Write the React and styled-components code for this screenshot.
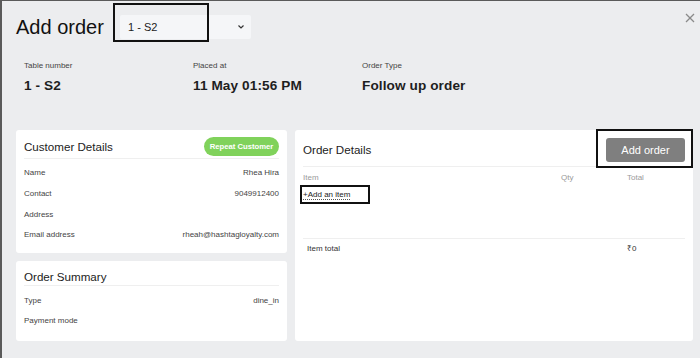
import React from "react";
import styled, { createGlobalStyle } from "styled-components";

const Global = createGlobalStyle`
  html, body { margin: 0; padding: 0; }
  body { font-family: "Liberation Sans", Arial, sans-serif; background: #ecedef; }
  * { box-sizing: border-box; }
`;

const Page = styled.div`
  width: 700px;
  height: 358px;
  overflow: hidden;
  background: #ecedef;
  border-top: 1px solid #5a5a5a;
  border-left: 2px solid #5a5a5a;
  padding: 14px 7px 0 14px;
  display: flex;
  flex-direction: column;
`;

const Header = styled.div`
  display: flex;
  align-items: center;
  height: 24px;
`;

const Title = styled.h1`
  margin: 0 16px 0 0;
  font-size: 20px;
  font-weight: 400;
  line-height: 24px;
  color: #111;
  width: 88px;
  white-space: nowrap;
`;

const Anchor = styled.div`
  position: relative;
  width: fit-content;
  line-height: 0;
`;

const Highlight = styled.div`
  position: absolute;
  border: 2px solid #111;
  pointer-events: none;
  left: ${(p) => p.$l}px;
  top: ${(p) => p.$t}px;
  width: ${(p) => p.$w}px;
  height: ${(p) => p.$h}px;
`;

const SelectBox = styled.div`
  width: 131px;
  height: 24px;
  background: #f5f6f8;
  border-radius: 2px;
  display: flex;
  align-items: center;
  justify-content: space-between;
  padding: 0 6px 0 8px;
  font-size: 11px;
  line-height: 14px;
  color: #222;
`;

const Close = styled.button`
  margin-left: auto;
  align-self: flex-start;
  margin-top: -3px;
  margin-right: -3px;
  background: none;
  border: none;
  padding: 0;
  width: 12px;
  height: 12px;
  display: flex;
  align-items: center;
  justify-content: center;
`;

const InfoGrid = styled.div`
  display: grid;
  grid-template-columns: 169px 169px 169px;
  padding-left: 8px;
  margin-top: 22px;
`;

const InfoCell = styled.div`
  display: flex;
  flex-direction: column;
  gap: 7px;
`;

const InfoLabel = styled.div`
  font-size: 8px;
  line-height: 10px;
  color: #444;
`;

const InfoValue = styled.div`
  font-size: 13.6px;
  line-height: 16px;
  font-weight: 700;
  color: #1e1e1e;
  letter-spacing: 0.1px;
`;

const Cards = styled.div`
  display: grid;
  grid-template-columns: 271px 1fr;
  gap: 8px;
  margin-top: 36px;
  height: 211px;
`;

const LeftCol = styled.div`
  display: flex;
  flex-direction: column;
  gap: 8px;
`;

const Card = styled.div`
  background: #fff;
  border-radius: 3px;
  padding: 8px 8px 8px;
  height: ${(p) => p.$h}px;
  display: flex;
  flex-direction: column;
`;

const CardHeader = styled.div`
  display: flex;
  align-items: center;
  justify-content: space-between;
  min-height: ${(p) => p.$h}px;
  padding-bottom: ${(p) => p.$pb}px;
  border-bottom: 1px solid #efefef;
`;

const CardTitle = styled.div`
  font-size: 11.6px;
  color: #222;
  line-height: 14px;
`;

const Pill = styled.span`
  background: #80d25b;
  color: #fff;
  font-weight: 700;
  font-size: 7.7px;
  height: 19px;
  width: 75px;
  border-radius: 10px;
  display: flex;
  align-items: center;
  justify-content: center;
`;

const Rows = styled.div`
  padding-top: 4px;
`;

const Row = styled.div`
  display: flex;
  justify-content: space-between;
  align-items: center;
  height: 20.6px;
  font-size: 8px;
  color: #444;
`;

const PrimaryBtn = styled.button`
  width: 79px;
  height: 24px;
  border: none;
  border-radius: 3px;
  background: #7f7f7f;
  color: #fff;
  font-family: "Liberation Sans", Arial, sans-serif;
  font-size: 11px;
  line-height: 14px;
  padding: 0;
`;

const TableGrid = styled.div`
  display: grid;
  grid-template-columns: 258px 66px 1fr;
  font-size: 8px;
  line-height: 10px;
  color: ${(p) => p.$c};
  padding-top: ${(p) => p.$pt}px;
`;

const Cell = styled.div`
  padding-left: ${(p) => p.$pl || 0}px;
`;

const ItemArea = styled.div`
  height: 56px;
  border-bottom: 1px solid #efefef;
  padding-top: 7px;
`;

const AddItem = styled.span`
  display: block;
  font-size: 8px;
  line-height: 9px;
  color: #222;
  border-bottom: 1px dotted #555;
  white-space: nowrap;
`;

const Chevron = () => (
  <svg width="8" height="6" viewBox="0 0 8 6">
    <polyline points="1.5,1.5 4,4 6.5,1.5" fill="none" stroke="#333" strokeWidth="1.2" />
  </svg>
);

const XIcon = () => (
  <svg width="10" height="10" viewBox="0 0 10 10">
    <line x1="1" y1="1" x2="9" y2="9" stroke="#8a8a8a" strokeWidth="1.3" />
    <line x1="9" y1="1" x2="1" y2="9" stroke="#8a8a8a" strokeWidth="1.3" />
  </svg>
);

const customer = [
  ["Name", "Rhea Hira"],
  ["Contact", "9049912400"],
  ["Address", ""],
  ["Email address", "rheah@hashtagloyalty.com"],
];

const summary = [
  ["Type", "dine_in"],
  ["Payment mode", ""],
];

const info = [
  ["Table number", "1 - S2"],
  ["Placed at", "11 May 01:56 PM"],
  ["Order Type", "Follow up order"],
];

export default function App() {
  return (
    <>
      <Global />
      <Page>
        <Header>
          <Title>Add order</Title>
          <Anchor>
            <SelectBox>
              <span>1 - S2</span>
              <Chevron />
            </SelectBox>
            <Highlight $l={-7} $t={-12} $w={96} $h={39} />
          </Anchor>
          <Close aria-label="Close">
            <XIcon />
          </Close>
        </Header>

        <InfoGrid>
          {info.map(([l, v]) => (
            <InfoCell key={l}>
              <InfoLabel>{l}</InfoLabel>
              <InfoValue>{v}</InfoValue>
            </InfoCell>
          ))}
        </InfoGrid>

        <Cards>
          <LeftCol>
            <Card $h={123}>
              <CardHeader $h={19} $pb={2}>
                <CardTitle>Customer Details</CardTitle>
                <Pill>Repeat Customer</Pill>
              </CardHeader>
              <Rows>
                {customer.map(([l, v]) => (
                  <Row key={l}>
                    <span>{l}</span>
                    <span>{v}</span>
                  </Row>
                ))}
              </Rows>
            </Card>
            <Card $h={80}>
              <CardHeader $h={17} $pb={1}>
                <CardTitle>Order Summary</CardTitle>
              </CardHeader>
              <Rows>
                {summary.map(([l, v]) => (
                  <Row key={l}>
                    <span>{l}</span>
                    <span>{v}</span>
                  </Row>
                ))}
              </Rows>
            </Card>
          </LeftCol>

          <Card $h={211}>
            <CardHeader $h={24} $pb={4}>
              <CardTitle>Order Details</CardTitle>
              <Anchor>
                <PrimaryBtn>Add order</PrimaryBtn>
                <Highlight $l={-10} $t={-9} $w={97} $h={39} />
              </Anchor>
            </CardHeader>
            <TableGrid $c="#9a9a9a" $pt={6}>
              <Cell>Item</Cell>
              <Cell>Qty</Cell>
              <Cell>Total</Cell>
            </TableGrid>
            <ItemArea>
              <Anchor>
                <AddItem>+Add an item</AddItem>
                <Highlight $l={-3} $t={-5} $w={70} $h={19} />
              </Anchor>
            </ItemArea>
            <TableGrid $c="#333" $pt={5}>
              <Cell $pl={4}>Item total</Cell>
              <Cell />
              <Cell>₹0</Cell>
            </TableGrid>
          </Card>
        </Cards>
      </Page>
    </>
  );
}
